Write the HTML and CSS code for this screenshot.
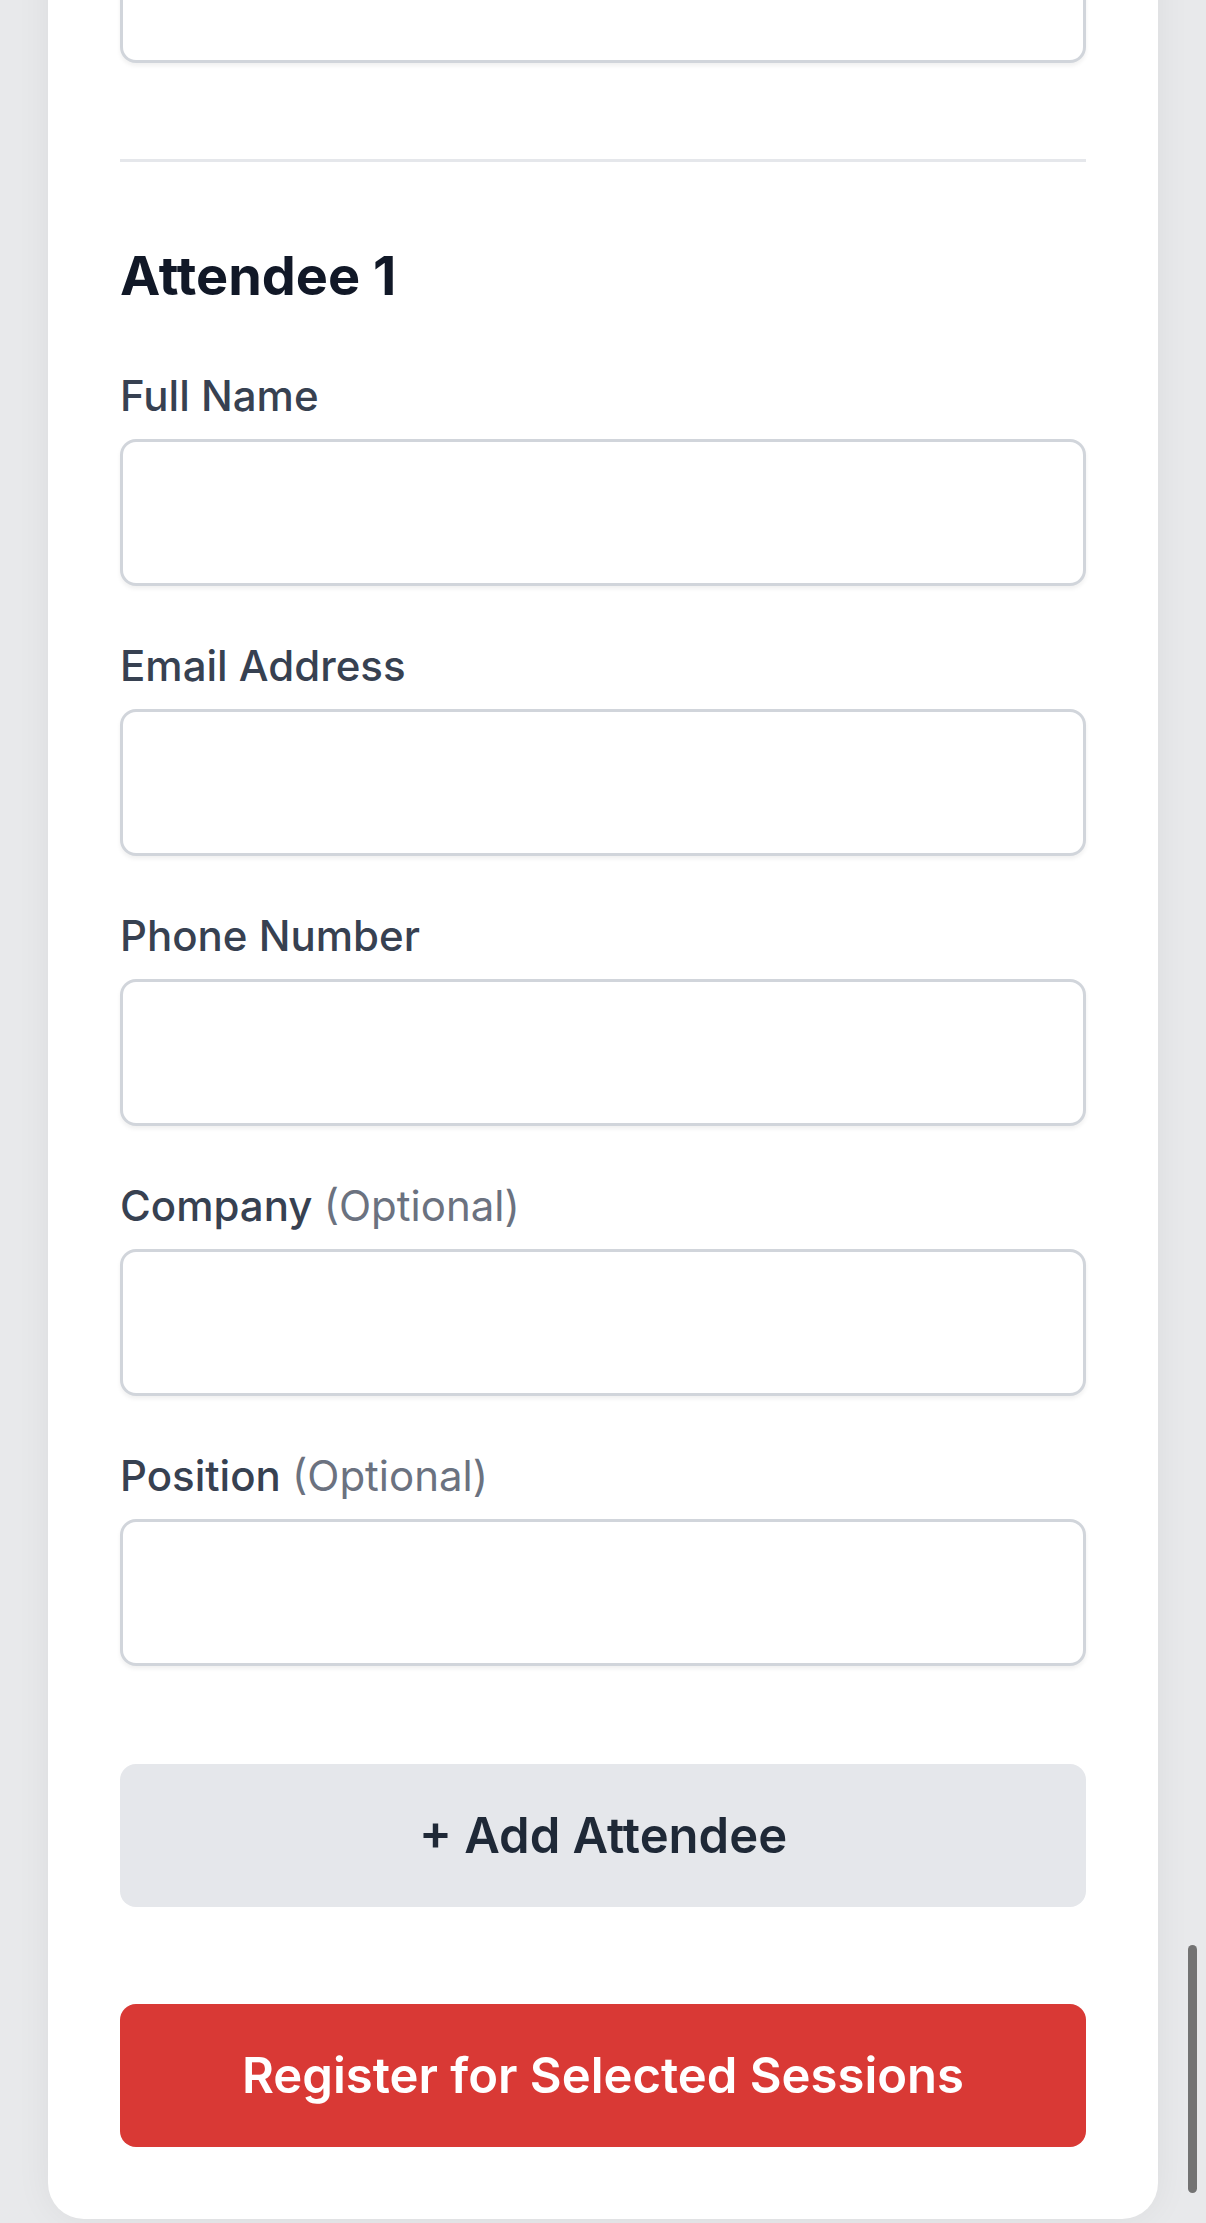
FILE: index.html
```html
<!DOCTYPE html>
<html lang="en">
<head>
  <meta charset="UTF-8">
  <meta name="viewport" content="width=device-width, initial-scale=1.0">
  <title>Session Registration</title>
  <link rel="stylesheet" href="styles.css">
</head>
<body>
  <div class="page">
    <form class="card" id="registerForm">
      <!-- Previous field (scrolled out of view) -->
      <input class="input" type="text" aria-label="Notes">

      <!-- Attendees -->
      <div class="attendees" id="attendees">
        <div class="attendee">
          <h2>Attendee 1</h2>

          <div class="field">
            <label for="name1">Full Name</label>
            <input class="input" id="name1" type="text">
          </div>

          <div class="field">
            <label for="email1">Email Address</label>
            <input class="input" id="email1" type="email">
          </div>

          <div class="field">
            <label for="phone1">Phone Number</label>
            <input class="input" id="phone1" type="tel">
          </div>

          <div class="field">
            <label for="company1">Company <span class="optional">(Optional)</span></label>
            <input class="input" id="company1" type="text">
          </div>

          <div class="field">
            <label for="position1">Position <span class="optional">(Optional)</span></label>
            <input class="input" id="position1" type="text">
          </div>
        </div>
      </div>

      <button type="button" class="btn btn-add" id="addButton">+ Add Attendee</button>
      <button type="submit" class="btn btn-submit">Register for Selected Sessions</button>
    </form>
  </div>

  <div class="scrollbar"></div>
</body>
</html>
```

FILE: styles.css
```css
* {
  margin: 0;
  padding: 0;
  box-sizing: border-box;
}

html, body {
  height: 2223px;
  overflow: hidden;
}

body {
  font-family: Inter, "Noto Sans", sans-serif;
  background: #e8e9eb;
  color: #111827;
}

.page {
  padding: 0 48px;
}

.card {
  margin-top: -84px;
  background: #fff;
  border-radius: 0 0 36px 36px;
  padding: 0 72px 72px;
  box-shadow: 0 0 36px rgba(0, 0, 0, 0.06);
}

.input {
  display: block;
  width: 100%;
  height: 147px;
  border: 3px solid #d1d5db;
  border-radius: 16px;
  background: #fff;
  box-shadow: 0 3px 4px rgba(0, 0, 0, 0.06);
  font-family: inherit;
  font-size: 42px;
  padding: 0 36px;
  outline: none;
}

.attendees {
  margin-top: 96px;
  border-top: 3px solid #e5e7eb;
  padding-top: 72px;
}

.attendee h2 {
  font-size: 54px;
  line-height: 84px;
  font-weight: 700;
  color: #111827;
  margin-bottom: 48px;
}

.field {
  margin-bottom: 50px;
}

.field:last-child {
  margin-bottom: 0;
}

.field label {
  display: block;
  font-size: 42px;
  line-height: 60px;
  font-weight: 500;
  color: #374151;
  margin-bottom: 13px;
}

.optional {
  font-weight: 400;
  color: #6b7280;
}

.btn {
  display: block;
  width: 100%;
  height: 143px;
  border: none;
  border-radius: 16px;
  font-family: inherit;
  font-size: 49px;
  font-weight: 600;
  cursor: pointer;
}

.btn-add {
  margin-top: 98px;
  background: #e5e7eb;
  color: #1f2937;
}

.btn-submit {
  margin-top: 97px;
  background: #d93935;
  color: #fff;
}

.scrollbar {
  position: fixed;
  right: 9px;
  top: 1945px;
  width: 9px;
  height: 248px;
  border-radius: 5px;
  background: #737373;
}
```
